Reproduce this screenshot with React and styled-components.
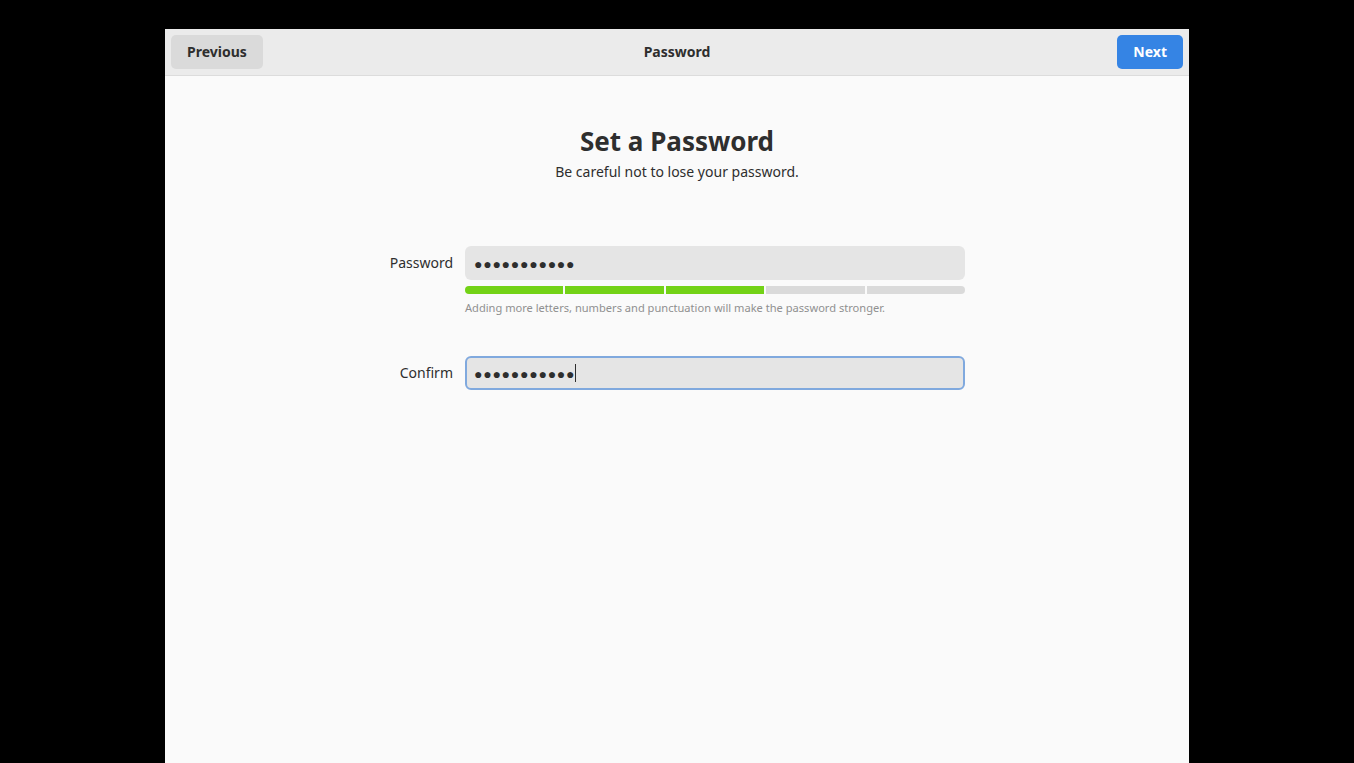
import React from "react";
import styled, { createGlobalStyle } from "styled-components";

const Global = createGlobalStyle`
  html, body { margin: 0; background: #000; }
  body { font-family: "Noto Sans", "Open Sans", sans-serif; color: #2e3436; }
`;

const Screen = styled.div`
  width: 1354px;
  height: 763px;
  display: flex;
  justify-content: center;
  padding-top: 29px;
  box-sizing: border-box;
  overflow: hidden;
`;

const Window = styled.div`
  width: 1024px;
  background: #fafafa;
  display: flex;
  flex-direction: column;
`;

const HeaderBar = styled.div`
  height: 47px;
  box-sizing: border-box;
  background: #ebebeb;
  border-bottom: 1px solid #dcdcdc;
  display: flex;
  align-items: center;
  justify-content: space-between;
  padding: 0 6px 1px;
  position: relative;
`;

const HeaderTitle = styled.div`
  position: absolute;
  left: 0;
  right: 0;
  text-align: center;
  font-size: 14px;
  font-weight: 700;
  color: #2e2e2e;
  pointer-events: none;
`;

const Button = styled.button`
  height: 34px;
  padding: 0 16px;
  border: none;
  border-radius: 5px;
  font-family: inherit;
  font-size: 14px;
  font-weight: 700;
  background: ${(p) => (p.$primary ? "#3584e4" : "#dadada")};
  color: ${(p) => (p.$primary ? "#ffffff" : "#2e2e2e")};
`;

const Body = styled.div`
  display: flex;
  flex-direction: column;
  align-items: center;
  padding-top: 47px;
`;

const Heading = styled.h1`
  margin: 0;
  font-size: 26px;
  font-weight: 700;
  color: #2e2e2e;
  line-height: 36px;
`;

const Sub = styled.p`
  margin: 3px 0 0;
  font-size: 14px;
  color: #2e2e2e;
  line-height: 20px;
`;

const Form = styled.div`
  align-self: flex-start;
  margin-top: 64px;
  display: grid;
  grid-template-columns: 288px 500px;
  column-gap: 12px;
`;

const Label = styled.div`
  font-size: 14px;
  color: #2e2e2e;
  text-align: right;
  height: 34px;
  line-height: 34px;
`;

const Field = styled.div`
  display: flex;
  flex-direction: column;
`;

const Entry = styled.div`
  height: 34px;
  box-sizing: border-box;
  border-radius: 6px;
  background: #e5e5e5;
  border: 2px solid ${(p) => (p.$focused ? "#80a9de" : "transparent")};
  display: flex;
  align-items: center;
  padding-left: 7px;
  font-size: 14px;
  letter-spacing: 0.75px;
  color: #2e2e2e;
`;

const Caret = styled.span`
  display: inline-block;
  width: 1px;
  height: 18px;
  background: #2e2e2e;
`;

const Strength = styled.div`
  margin-top: 6px;
  display: flex;
  gap: 2px;
  height: 8px;
`;

const Segment = styled.div`
  flex: 1;
  background: ${(p) => (p.$on ? "#73d216" : "#dadada")};
  &:first-child { border-radius: 4px 0 0 4px; }
  &:last-child { border-radius: 0 4px 4px 0; }
`;

const Hint = styled.div`
  margin-top: 6px;
  font-size: 11.1px;
  color: #909090;
  line-height: 16px;
`;

const Spacer = styled.div`
  height: 40px;
  grid-column: 1 / -1;
`;

const dots = "●●●●●●●●●●●";

export default function App() {
  return (
    <Screen>
      <Global />
      <Window>
        <HeaderBar>
          <Button>Previous</Button>
          <HeaderTitle>Password</HeaderTitle>
          <Button $primary>Next</Button>
        </HeaderBar>
        <Body>
          <Heading>Set a Password</Heading>
          <Sub>Be careful not to lose your password.</Sub>
          <Form>
            <Label>Password</Label>
            <Field>
              <Entry>{dots}</Entry>
              <Strength>
                {[1, 1, 1, 0, 0].map((on, i) => (
                  <Segment key={i} $on={!!on} />
                ))}
              </Strength>
              <Hint>
                Adding more letters, numbers and punctuation will make the password stronger.
              </Hint>
            </Field>
            <Spacer />
            <Label>Confirm</Label>
            <Field>
              <Entry $focused>
                {dots}
                <Caret />
              </Entry>
            </Field>
          </Form>
        </Body>
      </Window>
    </Screen>
  );
}
